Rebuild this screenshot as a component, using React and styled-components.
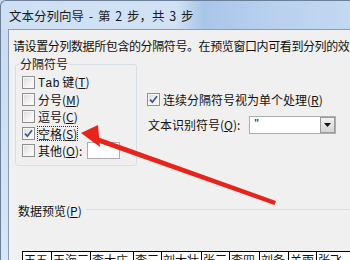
import React from 'react';
import styled, { createGlobalStyle } from 'styled-components';

const GlobalStyle = createGlobalStyle`
  html, body { margin: 0; padding: 0; }
  body {
    width: 350px;
    height: 260px;
    overflow: hidden;
    font-family: "Noto Sans CJK SC", "Liberation Sans", sans-serif;
    font-size: 12px;
    color: #111;
  }
`;

const Screen = styled.div`
  position: relative;
  width: 350px;
  height: 260px;
  overflow: hidden;
  display: flex;
  flex-direction: column;
  background: #c8dbf1;
`;

const TitleBar = styled.div`
  flex: none;
  height: 28px;
  display: flex;
  align-items: center;
  padding-left: 8px;
  border-top-left-radius: 6px;
  border-top: 1px solid #6b7f99;
  border-left: 1px solid #6b7f99;
  background: linear-gradient(to right, #cfe0f4 0%, #d2e2f4 50%, #a9c5e8 58%, #b7cfee 75%, #c3d8f1 100%);
  font-size: 12.5px;
  word-spacing: 2px;
  color: #1a1a1a;
  white-space: nowrap;
`;

const Frame = styled.div`
  flex: 1;
  display: flex;
  padding-left: 7px;
  border-left: 1px solid #6b7f99;
  background: linear-gradient(to bottom, #cadcf1, #d8e6f6);
`;

const Panel = styled.div`
  flex: 1;
  display: flex;
  flex-direction: column;
  padding-left: 4px;
  background: #f0f0f0;
  border-top: 1px solid #8a9bb3;
  border-left: 1px solid #8a9bb3;
`;

const Instruction = styled.div`
  margin-top: 8px;
  line-height: 16px;
  letter-spacing: -0.4px;
  white-space: nowrap;
`;

const OptionsRow = styled.div`
  display: flex;
  align-items: flex-start;
  margin-top: 2px;
`;

const GroupBox = styled.fieldset`
  box-sizing: border-box;
  width: 122px;
  height: 110px;
  margin: 0 0 0 2px;
  padding: 2px 6px 0;
  border: 1px solid #d5dfe5;
  border-radius: 3px;
`;

const Legend = styled.legend`
  margin-left: -3px;
  padding: 0 1px;
  line-height: 16px;
  color: #222;
`;

const CheckRow = styled.div`
  display: flex;
  align-items: center;
  gap: ${(p) => p.$gap ?? 2}px;
  height: 17px;
  margin-top: ${(p) => p.$top ?? 0}px;
  white-space: nowrap;
`;

const Box = styled.span`
  flex: none;
  box-sizing: border-box;
  width: 13px;
  height: 13px;
  display: flex;
  align-items: center;
  justify-content: center;
  border: 1px solid #8f8f8f;
  background: linear-gradient(135deg, #d9d9d9 0%, #f4f4f4 60%, #ffffff 100%);
  box-shadow: inset 0 0 0 1px #f7f7f7;
`;

const Label = styled.span`
  padding: 0 1px;
  line-height: 15px;
  outline: ${(p) => (p.$focus ? '1px dotted #333' : 'none')};
  outline-offset: -1px;
`;

const Mono = styled.span`
  font-family: "Liberation Mono", monospace;
`;

const TextInput = styled.span`
  box-sizing: border-box;
  width: 33px;
  height: 17px;
  margin-left: 2px;
  background: #fff;
  border: 1px solid #abadb3;
`;

const RightColumn = styled.div`
  display: flex;
  flex-direction: column;
  margin-left: 10px;
  padding-top: 35px;
`;

const Select = styled.div`
  box-sizing: border-box;
  display: flex;
  width: 87px;
  height: 18px;
  margin-left: 8px;
  background: #fff;
  border: 1px solid #abadb3;
`;

const SelectValue = styled.span`
  flex: 1;
  padding-left: 4px;
  line-height: 14px;
  font-family: "Liberation Sans", sans-serif;
`;

const DropButton = styled.span`
  box-sizing: border-box;
  width: 15px;
  display: flex;
  align-items: center;
  justify-content: center;
  border: 1px solid #9a9a9a;
  background: linear-gradient(to bottom, #f2f2f2, #d4d4d4);
`;

const PreviewHeader = styled.div`
  display: flex;
  align-items: center;
  margin: 37px 0 0 5px;
  line-height: 16px;
`;

const Rule = styled.div`
  flex: 1;
  height: 0;
  margin: -3px 0 0 4px;
  border-top: 1px solid #d5dfe5;
`;

const PreviewTable = styled.table`
  margin: 32px 0 0 9px;
  border-collapse: collapse;
  background: #fff;
`;

const Cell = styled.td`
  box-sizing: border-box;
  width: ${(p) => p.$w}px;
  min-width: ${(p) => p.$w}px;
  padding: 0 1px;
  height: 16px;
  line-height: 15px;
  border: 1px solid #000;
  white-space: nowrap;
  vertical-align: top;
`;

const ArrowLayer = styled.svg`
  position: absolute;
  left: 0;
  top: 0;
  pointer-events: none;
`;

const Check = () => (
  <svg width="9" height="9" viewBox="0 0 9 9">
    <path d="M1 4.6 L3.4 7.2 L8 1.2" fill="none" stroke="#3d5a99" strokeWidth="1.8" />
  </svg>
);

const Checkbox = ({ checked }) => <Box>{checked && <Check />}</Box>;

const preview = [
  ['王五', 29], ['王海三', 38], ['李大庄', 43], ['李三', 28], ['刘大壮', 40],
  ['张三', 28], ['李四', 30], ['刘备', 29], ['关雨', 28], ['张飞', 44],
];

export default function App() {
  return (
    <Screen>
      <GlobalStyle />
      <TitleBar>文本分列向导 - 第 2 步，共 3 步</TitleBar>
      <Frame>
        <Panel>
          <Instruction>请设置分列数据所包含的分隔符号。在预览窗口内可看到分列的效果</Instruction>
          <OptionsRow>
            <GroupBox>
              <Legend>分隔符号</Legend>
              <CheckRow>
                <Checkbox />
                <Label><Mono>Tab</Mono> 键(<u>T</u>)</Label>
              </CheckRow>
              <CheckRow>
                <Checkbox />
                <Label>分号(<u>M</u>)</Label>
              </CheckRow>
              <CheckRow>
                <Checkbox />
                <Label>逗号(<u>C</u>)</Label>
              </CheckRow>
              <CheckRow>
                <Checkbox checked />
                <Label $focus>空格(<u>S</u>)</Label>
              </CheckRow>
              <CheckRow>
                <Checkbox />
                <Label>其他(<u>O</u>):</Label>
                <TextInput />
              </CheckRow>
            </GroupBox>
            <RightColumn>
              <CheckRow>
                <Checkbox checked />
                <Label>连续分隔符号视为单个处理(<u>R</u>)</Label>
              </CheckRow>
              <CheckRow $top={8} $gap={0}>
                <Label>文本识别符号(<u>Q</u>):</Label>
                <Select>
                  <SelectValue>"</SelectValue>
                  <DropButton>
                    <svg width="7" height="4" viewBox="0 0 7 4">
                      <path d="M0 0 H7 L3.5 4 Z" fill="#111" />
                    </svg>
                  </DropButton>
                </Select>
              </CheckRow>
            </RightColumn>
          </OptionsRow>
          <PreviewHeader>
            <span>数据预览(<u>P</u>)</span>
            <Rule />
          </PreviewHeader>
          <PreviewTable>
            <tbody>
              <tr>
                {preview.map(([name, w]) => (
                  <Cell key={name} $w={w}>{name}</Cell>
                ))}
              </tr>
            </tbody>
          </PreviewTable>
        </Panel>
      </Frame>
      <ArrowLayer width="350" height="260" viewBox="0 0 350 260">
        <polygon points="96,136.5 276,201 274.5,205 95,141.5" fill="#e8231b" />
        <polygon points="81,133 98,125 100,147" fill="#e8231b" />
      </ArrowLayer>
    </Screen>
  );
}
